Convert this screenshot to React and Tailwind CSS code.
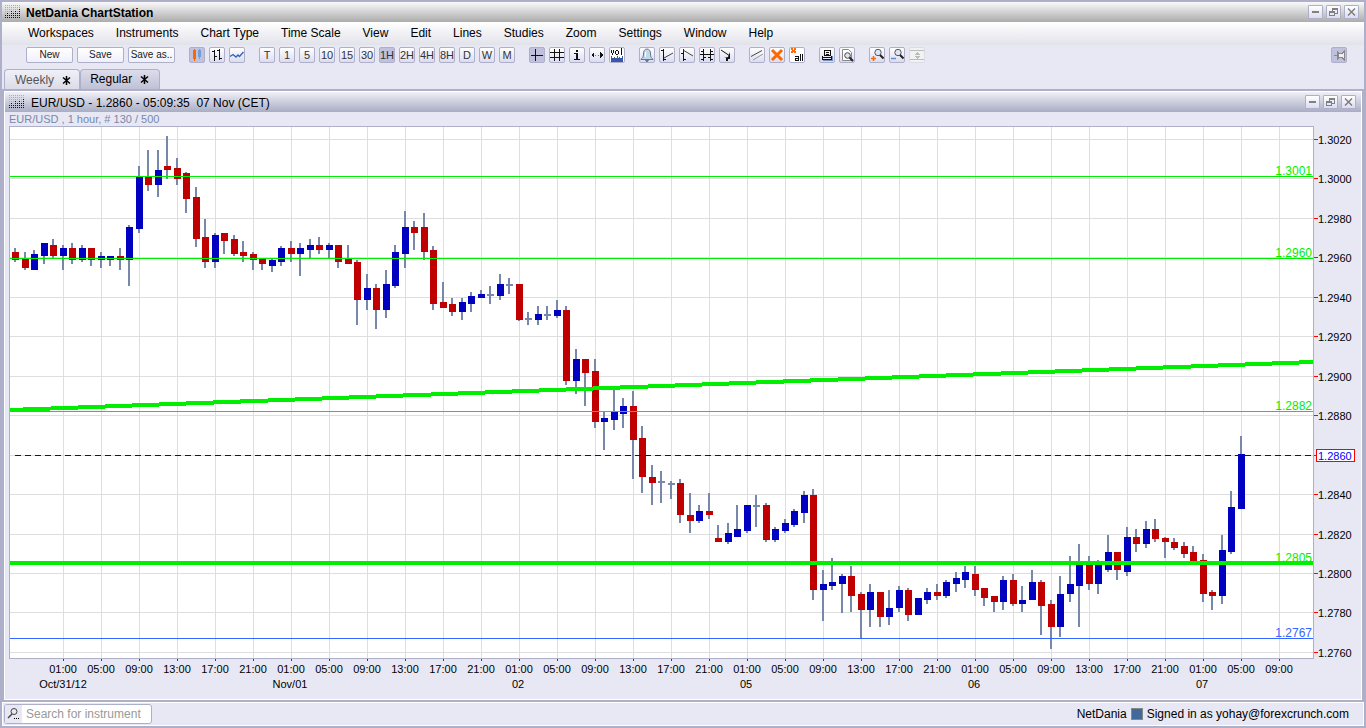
import clsx from 'clsx'

const MENUS = ['Workspaces', 'Instruments', 'Chart Type', 'Time Scale', 'View', 'Edit', 'Lines', 'Studies', 'Zoom', 'Settings', 'Window', 'Help']
const PERIODS = ['T', '1', '5', '10', '15', '30', '1H', '2H', '4H', '8H', 'D', 'W', 'M']

// one candle per hour: [high, bodyTop, bodyBottom, low, kind] in chart units
// kind: u = up, d = down, n = open equals close
const CANDLES = [
  [248, 252, 260, 262, 'd'], [252, 258, 268, 270, 'd'], [250, 254, 270, 270, 'u'], [243, 243, 256, 264, 'u'], [239, 245, 256, 258, 'd'],
  [245, 248, 256, 270, 'u'], [243, 248, 260, 264, 'd'], [245, 248, 260, 262, 'u'], [248, 248, 260, 266, 'd'], [252, 256, 260, 268, 'u'],
  [256, 256, 260, 266, 'u'], [248, 256, 260, 270, 'd'], [225, 227, 260, 286, 'u'], [166, 177, 229, 233, 'u'], [150, 176, 185, 191, 'd'],
  [150, 170, 185, 197, 'u'], [136, 166, 170, 179, 'd'], [158, 168, 179, 185, 'd'], [172, 173, 199, 213, 'd'], [187, 197, 239, 247, 'd'],
  [219, 237, 262, 268, 'd'], [233, 235, 262, 268, 'u'], [233, 233, 241, 254, 'd'], [235, 239, 254, 256, 'd'], [241, 252, 256, 262, 'd'],
  [252, 254, 260, 270, 'd'], [259, 259, 264, 270, 'd'], [259, 260, 266, 272, 'u'], [246, 248, 262, 266, 'u'], [241, 248, 254, 262, 'd'],
  [243, 248, 254, 276, 'u'], [239, 245, 250, 259, 'u'], [237, 245, 250, 254, 'd'], [243, 245, 250, 259, 'u'], [245, 245, 262, 268, 'd'],
  [245, 259, 264, 264, 'd'], [260, 262, 300, 325, 'd'], [274, 288, 300, 310, 'u'], [284, 288, 310, 329, 'd'], [270, 284, 310, 318, 'u'],
  [245, 252, 286, 288, 'u'], [211, 227, 254, 268, 'u'], [221, 227, 233, 250, 'd'], [213, 227, 252, 260, 'd'], [246, 250, 304, 310, 'd'],
  [282, 302, 308, 308, 'd'], [298, 304, 312, 316, 'd'], [298, 302, 312, 320, 'u'], [292, 296, 304, 312, 'u'], [290, 294, 298, 298, 'u'],
  [286, 294, 296, 304, 'n'], [274, 284, 296, 300, 'u'], [278, 284, 286, 294, 'n'], [284, 284, 320, 321, 'd'], [312, 318, 320, 325, 'n'],
  [306, 314, 320, 325, 'u'], [306, 314, 316, 320, 'n'], [300, 310, 316, 318, 'u'], [306, 310, 381, 385, 'd'], [349, 359, 381, 394, 'u'],
  [359, 359, 373, 406, 'd'], [359, 371, 422, 428, 'd'], [412, 418, 422, 450, 'u'], [388, 412, 420, 430, 'u'], [398, 406, 414, 428, 'u'],
  [391, 406, 440, 479, 'd'], [426, 438, 477, 493, 'd'], [465, 477, 483, 505, 'd'], [471, 481, 483, 503, 'n'], [481, 483, 485, 499, 'n'],
  [479, 483, 515, 523, 'd'], [493, 515, 521, 533, 'd'], [505, 511, 521, 523, 'u'], [493, 511, 515, 519, 'd'], [525, 538, 542, 542, 'd'],
  [523, 533, 542, 544, 'u'], [505, 529, 537, 537, 'u'], [505, 505, 531, 533, 'u'], [495, 505, 507, 527, 'n'], [503, 505, 540, 542, 'd'],
  [527, 529, 540, 542, 'u'], [519, 523, 531, 533, 'u'], [509, 511, 525, 527, 'u'], [491, 495, 513, 523, 'u'], [489, 495, 590, 600, 'd'],
  [570, 584, 590, 621, 'u'], [558, 582, 586, 590, 'u'], [574, 576, 584, 613, 'u'], [566, 576, 596, 612, 'd'], [592, 594, 610, 638, 'd'],
  [584, 592, 610, 627, 'u'], [592, 592, 617, 627, 'd'], [590, 608, 617, 625, 'u'], [586, 590, 608, 612, 'u'], [588, 590, 615, 621, 'd'],
  [598, 598, 615, 615, 'u'], [588, 592, 600, 604, 'u'], [584, 592, 596, 600, 'd'], [580, 582, 596, 598, 'u'], [572, 578, 584, 592, 'u'],
  [566, 572, 580, 588, 'u'], [566, 574, 590, 596, 'd'], [588, 588, 598, 606, 'd'], [596, 596, 602, 612, 'd'], [576, 580, 602, 610, 'u'],
  [574, 580, 604, 606, 'd'], [586, 600, 604, 612, 'u'], [570, 582, 600, 600, 'u'], [580, 582, 606, 635, 'd'], [600, 604, 627, 649, 'd'],
  [576, 594, 627, 637, 'u'], [556, 584, 594, 602, 'u'], [544, 564, 586, 627, 'u'], [556, 564, 584, 590, 'd'], [560, 564, 584, 594, 'u'],
  [535, 552, 570, 572, 'u'], [552, 552, 570, 580, 'd'], [527, 537, 572, 576, 'u'], [529, 537, 544, 552, 'd'], [521, 529, 544, 548, 'u'],
  [519, 529, 539, 542, 'd'], [537, 538, 542, 558, 'd'], [538, 542, 548, 550, 'd'], [542, 546, 554, 558, 'd'], [546, 552, 562, 562, 'd'],
  [554, 560, 594, 602, 'd'], [590, 592, 596, 610, 'd'], [535, 550, 596, 604, 'u'], [491, 507, 552, 554, 'u'], [436, 454, 509, 509, 'u'],
]
const CANDLE_FILL = { u: '#0000c0', d: '#c00000', n: '#7788ab' }

const PRICES = [
  ['1.3020', 139], ['1.3000', 178], ['1.2980', 218], ['1.2960', 257], ['1.2940', 297], ['1.2920', 336], ['1.2900', 376],
  ['1.2880', 415], ['1.2860', 455], ['1.2840', 494], ['1.2820', 534], ['1.2800', 573], ['1.2780', 612], ['1.2760', 652],
]
const HOURS = ['01:00', '05:00', '09:00', '13:00', '17:00', '21:00']
const TIMES = Array.from({ length: 33 }, (_, i) => ({ x: 63 + i * 38, label: HOURS[i % 6] }))
const DAYS = [['Oct/31/12', 63], ['Nov/01', 290], ['02', 518], ['05', 746], ['06', 974], ['07', 1202]]

const LEVELS = [
  { label: '1.3001', y: 176, h: 1, color: '#00ee00' },
  { label: '1.2960', y: 258, h: 1, color: '#00ee00' },
  { label: '1.2882', y: 411, h: 1, color: '#00ee00' },
  { label: '1.2805', y: 561, h: 4, color: '#00ee00' },
  { label: '1.2767', y: 638, h: 1, color: '#3366ff' },
]

function Grip() {
  const tops = [5, 4, 5, 3, 4, 3, 4, 2]
  return (
    <svg width="16" height="14" viewBox="0 0 16 14" shapeRendering="crispEdges" aria-hidden="true">
      {tops.map((top, col) =>
        [0, 1, 2, 3, 4, 5, 6].map((row) => (
          <rect key={`${col}-${row}`} x={col * 2} y={row * 2} width="1" height="1" fill={row >= top ? '#111' : '#b5ad98'} />
        ))
      )}
    </svg>
  )
}

function Icon({ children, crisp = true }) {
  return (
    <svg
      className="block shrink-0"
      width="14"
      height="14"
      viewBox="1 1 14 14"
      fill="none"
      stroke="#111"
      shapeRendering={crisp ? 'crispEdges' : 'auto'}
      aria-hidden="true"
    >
      {children}
    </svg>
  )
}

function Lens() {
  return (
    <>
      <circle cx="9" cy="5.5" r="3.2" fill="#dde6f2" stroke="#555" />
      <path d="M11 8l3.5 3.5" stroke="#222" strokeWidth="2" />
    </>
  )
}

const chartIcons = [
  { name: 'Candlesticks', on: true, art: (
    <Icon>
      <path d="M5.5 2v12" stroke="#ff6600" />
      <path d="M4 3h3v9H4z" fill="#ff6600" stroke="none" />
      <path d="M10.5 2v10" stroke="#6f9fd8" />
      <path d="M9 3h3v7H9z" fill="#6f9fd8" stroke="none" />
    </Icon>
  ) },
  { name: 'Bars', art: <Icon><path d="M5.5 3v11M3 4.5h2M6 9.5h2M10.5 2v11M8 3.5h2M11 11.5h2" /></Icon> },
  { name: 'Line', art: <Icon crisp={false}><path d="M1 9.5l3-2 3 2.5 2-2 1.5 1.5 4-4.5" stroke="#3464b4" strokeWidth="1.4" /></Icon> },
]

const viewIcons = [
  { name: 'Crosshair', on: true, art: <Icon><path d="M6.5 2v12M2 8.5h12" /></Icon> },
  { name: 'Grid', art: <Icon><path d="M5.5 2v12M10.5 2v12M1 5.5h14M1 10.5h14" /></Icon> },
  { name: 'Info', art: <Icon><path d="M7 3h2v2H7zM5 6h4v6H7V7H5zM5 12h6v1H5z" fill="#111" stroke="none" /></Icon> },
  { name: 'Fit width', art: (
    <Icon>
      <path d="M2 8l3-3v6zM14 8l-3-3v6z" fill="#111" stroke="none" />
      <path d="M6 8.5h1M9 8.5h1" stroke="#777" />
    </Icon>
  ) },
  { name: 'Volume', white: true, art: (
    <Icon>
      <path d="M2.5 3v3M3.5 6v2M4.5 3v3M7 3.5h2M6.5 4v3M9.5 4v3M7 7.5h2M12.5 1v7" />
      <path d="M2 15V9h1v2h2v-1h1v1h2V9h1v2h1v-1h1v1h2V9h1v6z" fill="#3a58a8" stroke="none" />
    </Icon>
  ) },
]

const drawIcons = [
  { name: 'Alert', art: (
    <Icon crisp={false}>
      <path d="M8 2C5.5 2 4.500 4 4.500 7S3.600 11 1.800 12.500h12.400C12.400 11 11.500 10 11.500 7S10.500 2 8 2z" fill="#c4d6e8" stroke="#65788f" />
      <path d="M6.5 13.500a1.600 1.600 0 003 0z" fill="#65788f" stroke="#65788f" />
      <path d="M6.500 5v5" stroke="#fff" />
    </Icon>
  ) },
  { name: 'Lower trend line', art: <Icon><path d="M4.5 2v12M2 3.5h2M5 12.5h2" /><path d="M5 11l9-5" stroke="#444" shapeRendering="auto" /></Icon> },
  { name: 'Upper trend line', art: <Icon><path d="M4.5 2v12M2 6.5h2M5 12.5h2" /><path d="M4 3l10 6" stroke="#444" shapeRendering="auto" /></Icon> },
  { name: 'Channel', art: <Icon><path d="M4.5 2v12M11.5 2v12M2 4.5h2M12 4.5h2M1 7.5h14M5 10.5h2M9 10.5h2M2 12.5h2M12 12.5h2" /></Icon> },
  { name: 'Arrow', art: (
    <Icon crisp={false}>
      <path d="M2 3l9 6" />
      <path d="M11 5v7H9v2H7v-3H5l4-1z" fill="#111" stroke="none" />
    </Icon>
  ) },
]

const eraseIcons = [
  { name: 'Parallel lines', art: <Icon crisp={false}><path d="M2 9.5l11-6" stroke="#444" /><path d="M4 13l10-6" stroke="#999" /></Icon> },
  { name: 'Delete line', art: <Icon crisp={false}><path d="M3 3l10 10M13 3L3 13" stroke="#ff6600" strokeWidth="3" /></Icon> },
  { name: 'Delete all lines', white: true, art: (
    <Icon>
      <path d="M2 1h2v2h1V1h2v2H6v1h1v2H5V5H4v1H2V4h1V3H2z" fill="#ff6600" stroke="none" />
      <path d="M6 9.5h3M9.500 9v5M6 13.500h3M6.500 11v3M7 11.500h2M11.500 7v7M13.500 7v7" />
    </Icon>
  ) },
]

const printIcons = [
  { name: 'Print', art: (
    <Icon>
      <path d="M5.5 3.5h6v5h-6zM7 5.5h3M7 7.5h3M3.5 8.500v4h9v-4M3 10.5h10" />
      <path d="M13.5 9v5M4 13.5h9" stroke="#6c8fc4" />
    </Icon>
  ) },
  { name: 'Print preview', art: (
    <Icon crisp={false}>
      <path d="M3.5 2.5h6l3 3v8h-9z" fill="#fff" stroke="#888" />
      <circle cx="8.5" cy="8.5" r="2.8" fill="#dde6f2" stroke="#444" />
      <path d="M10.5 10.5L14 14" stroke="#222" strokeWidth="2" />
    </Icon>
  ) },
]

const zoomIcons = [
  { name: 'Zoom in', art: <Icon crisp={false}><Lens /><path d="M2 11.5h5M4.5 9v5" stroke="#ff6600" strokeWidth="1.5" /></Icon> },
  { name: 'Zoom out', art: <Icon crisp={false}><Lens /><path d="M2 11.5h5" stroke="#5b8fd0" strokeWidth="1.5" /></Icon> },
  { name: 'Reset zoom', disabled: true, art: (
    <Icon>
      <path d="M1 3.5h14M1 12.5h14" stroke="#bbb" />
      <path d="M8 5l3 3H5zM8 12l3-3H5z" fill="#bbb" stroke="none" />
    </Icon>
  ) },
]

function ToolButton({ name, on, white, disabled, children }) {
  return (
    <button
      type="button"
      aria-label={name}
      aria-pressed={!!on}
      disabled={disabled}
      className={clsx(
        'flex size-4 shrink-0 items-center justify-center rounded-[2px] border text-[11px] leading-none text-[#333]',
        disabled ? 'border-[#dcdce4] bg-[#f2f2f2]' : 'border-[#adb0c8]',
        !disabled && (on ? 'bg-[#c0c1dc]' : white ? 'bg-white' : 'bg-linear-to-b from-white to-[#dcdcf0]')
      )}
    >
      {children}
    </button>
  )
}

function ToolGroup({ items }) {
  return (
    <div className="flex gap-1">
      {items.map((t) => (
        <ToolButton key={t.name} {...t}>{t.art}</ToolButton>
      ))}
    </div>
  )
}

function WindowButtons() {
  const frame = 'flex h-3.5 w-[15px] items-center justify-center rounded-[1px] border border-[#adb0c8] bg-linear-to-b from-white to-[#dcdcf0]'
  return (
    <div className="flex gap-[3px]">
      <button type="button" aria-label="Minimize" className={frame}>
        <svg width="11" height="10" shapeRendering="crispEdges"><path d="M2 4h7v2H2z" fill="#808080" /></svg>
      </button>
      <button type="button" aria-label="Restore" className={frame}>
        <svg width="11" height="10" shapeRendering="crispEdges" fill="none" stroke="#808080">
          <path d="M4 2.5h6M4.5 2v2M9.5 2v4M7 6.5h3M4 1.5h6" />
          <path d="M1 4.5h6M1 5.5h6M1.5 5v4M6.5 5v4M1 8.5h6" />
        </svg>
      </button>
      <button type="button" aria-label="Close" className={frame}>
        <svg width="11" height="10" fill="none" stroke="#777" strokeWidth="1.3"><path d="M2 1.5l7 7M9 1.5l-7 7" /></svg>
      </button>
    </div>
  )
}

function Tab({ label, active }) {
  return (
    <div
      className={clsx(
        'flex h-5 items-center gap-2 rounded-t-[4px] border border-b-0 border-[#adb0c8]',
        active ? 'bg-linear-to-b from-[#dcdcec] to-[#c0c1d6] pr-2.5 pb-0.5 pl-[9px] text-black' : 'bg-linear-to-b from-[#f0f0f8] to-[#dcdce8] pr-2 pl-2.5 text-[#555]'
      )}
    >
      <button type="button">{label}</button>
      <button type="button" aria-label={`Close ${label}`} className="pt-0.5">
        <svg className="block" width="9" height="9" viewBox="0 0 9 9" stroke="#000" strokeWidth="1.5" fill="none"><path d="M4.5 0v9M1 1.5l7 6M8 1.5l-7 6" /></svg>
      </button>
    </div>
  )
}

function Chart() {
  return (
    <svg className="block h-auto w-full font-['Liberation_Sans',Arial,sans-serif]" viewBox="5 126 1356 573" shapeRendering="crispEdges" role="img" aria-label="EUR/USD hourly candlestick chart">
      <rect x="9" y="126" width="1305" height="533" fill="#adb0c8" />
      <rect x="10" y="127" width="1303" height="531" fill="#fff" />

      {/* grid, axis ticks and axis labels */}
      {TIMES.map(({ x, label }) => (
        <g key={x}>
          <rect x={x} y="127" width="1" height="531" fill="#dedede" />
          <rect x={x} y="659" width="1" height="2" fill="#e00000" />
          <text x={x} y="673" textAnchor="middle" fontSize="11">{label}</text>
        </g>
      ))}
      {PRICES.map(([label, y]) => (
        <g key={label}>
          <rect x="10" y={y} width="1303" height="1" fill="#dedede" />
          <rect x="1314" y={y} width="4" height="1" fill="#ff0000" />
          {label !== '1.2860' && <text x="1318" y={y + 5} fontSize="11">{label}</text>}
        </g>
      ))}
      {DAYS.map(([label, x]) => (
        <text key={label} x={x} y="688" textAnchor="middle" fontSize="11">{label}</text>
      ))}

      {CANDLES.map(([high, top, bottom, low, kind], i) => {
        const x = Math.floor(14.5 + i * 9.5)
        return (
          <g key={i}>
            <rect x={x} y={high} width="2" height={low - high} fill="#7788ab" />
            <rect x={x - 2} y={top} width="7" height={bottom - top} fill={CANDLE_FILL[kind]} />
          </g>
        )
      })}

      {/* support, resistance and trend lines; thick ones overlap the label's foot */}
      {LEVELS.map(({ label, y, h, color }) => (
        <g key={label} fill={color}>
          <text x="1312" y={y - 1 + Math.floor(h / 2)} textAnchor="end" fontSize="12">{label}</text>
          <rect x="10" y={y} width="1303" height={h} />
        </g>
      ))}
      <path d="M10 410L1313 362" stroke="#00ee00" strokeWidth="4" />

      {/* last price */}
      <path d="M15 455.5H1313" stroke="#0000e0" strokeDasharray="6 4" />
      <rect x="1316.5" y="449.5" width="38" height="12" fill="#fff" stroke="#ff0000" />
      <text x="1318" y="460" fontSize="11" fill="#0000ff">1.2860</text>
    </svg>
  )
}

export default function App() {
  return (
    <div className="flex min-h-screen flex-col border-2 border-[#adb0c8] bg-[#e8e8f4] font-['Liberation_Sans',Arial,sans-serif] text-xs text-black">
      <header className="flex h-5 items-center gap-[5px] bg-linear-to-b from-[#fafafa] to-[#acacac] pr-[5px] pl-[3px]">
        <Grip />
        <h1 className="flex-1 pt-0.5 font-bold">NetDania ChartStation</h1>
        <WindowButtons />
      </header>

      <nav className="flex h-[23px] items-center gap-[22px] bg-linear-to-b from-white to-[#e2e2ea] pb-0.5 pl-[26px]">
        {MENUS.map((m) => <button key={m} type="button">{m}</button>)}
      </nav>

      <div className="flex h-6 items-start gap-3.5 pt-0.5 pr-[17px] pl-6">
        <div className="flex gap-1">
          {['New', 'Save', 'Save as..'].map((label) => (
            <button
              key={label}
              type="button"
              className="h-4 w-[47px] rounded-[2px] border border-[#adb0c8] bg-linear-to-b from-white to-[#f0f0fa] text-[10px] leading-[14px] whitespace-nowrap text-[#222]"
            >
              {label}
            </button>
          ))}
        </div>
        <ToolGroup items={chartIcons} />
        <div className="flex gap-1">
          {PERIODS.map((p) => <ToolButton key={p} name={p} on={p === '1H'}>{p}</ToolButton>)}
        </div>
        <ToolGroup items={viewIcons} />
        <ToolGroup items={drawIcons} />
        <ToolGroup items={eraseIcons} />
        <ToolGroup items={printIcons} />
        <ToolGroup items={zoomIcons} />
        <div className="ml-auto">
          <ToolButton name="Pin toolbar" on>
            <Icon>
              <path d="M3 8.5h3" stroke="#888" />
              <path d="M6.5 4v9M7 5.5l2 1h2l2-2v8l-2-2H9l-2 1z" fill="#eee" stroke="#888" />
            </Icon>
          </ToolButton>
        </div>
      </div>

      <div className="flex pl-0.5">
        <Tab label="Weekly" />
        <Tab label="Regular" active />
      </div>

      <main className="flex flex-1 flex-col border-2 border-[#adb0c8]">
        <section className="flex-1 border border-t-0 border-white">
          <div className="flex h-[21px] items-center gap-1.5 border-t border-white bg-linear-to-b from-[#f0f0f6] to-[#a9adc5] pr-[5px] pl-1">
            <Grip />
            <h2 className="flex-1 pt-0.5 whitespace-pre">EUR/USD - 1.2860 - 05:09:35  07 Nov (CET)</h2>
            <WindowButtons />
          </div>
          <p className="h-3.5 pl-1 text-[11px] leading-[14px] text-[#7788ab]">EUR/USD , 1 hour, # 130 / 500</p>
          <Chart />
        </section>
      </main>

      <footer className="flex h-6 items-center justify-between border border-white pr-3.5 pl-px">
        <label className="flex h-5 w-[148px] items-center overflow-hidden rounded-[3px] border border-[#adb0c8] bg-white">
          <span className="flex h-full w-[17px] shrink-0 items-center justify-center bg-[#e8e8f4]">
            <svg width="14" height="14" viewBox="0 0 14 14" fill="none" stroke="#444" aria-hidden="true">
              <circle cx="7" cy="4.5" r="3" />
              <path d="M5 7l-4 4" strokeWidth="1.5" />
              <path d="M7 11.5h1M9 11.5h1M11 11.5h1" stroke="#000" />
            </svg>
          </span>
          <input type="text" aria-label="Search for instrument" placeholder="Search for instrument" className="w-full min-w-0 px-1 outline-none placeholder:text-[#999]" />
        </label>
        <div className="flex items-center gap-1">
          <span>NetDania</span>
          <span className="size-3 border border-[#888] bg-[#41699a]" />
          <span>Signed in as yohay@forexcrunch.com</span>
        </div>
      </footer>
    </div>
  )
}
